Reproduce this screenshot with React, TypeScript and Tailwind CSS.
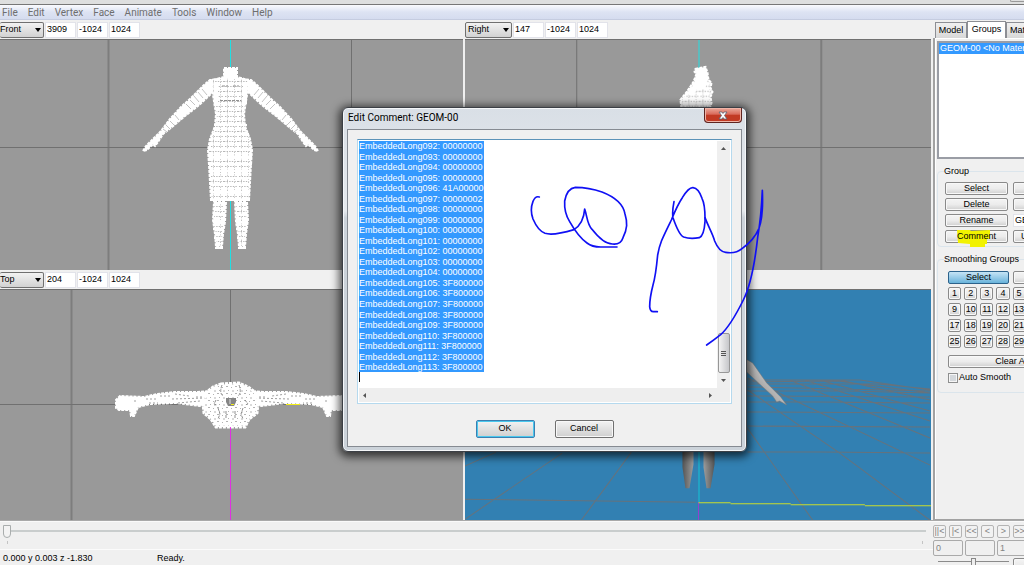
import type { ReactNode } from "react";
import clsx from "clsx";

const MENU = ["File", "Edit", "Vertex", "Face", "Animate", "Tools", "Window", "Help"];

const VALUES: Record<number, string> = { 96: "41A00000", 97: "00000002" };

const COMMENT = Array.from({ length: 22 }, (_, i) => {
  const n = 92 + i;
  const value = VALUES[n] ?? (n >= 105 ? "3F800000" : "00000000");
  return `EmbeddedLong${String(n).padStart(3, "0")}: ${value}`;
}).join("\n");

interface ViewportProps {
  name: string;
  values?: string[];
  viewBox: string;
  cut?: boolean;
  blue?: boolean;
  children: ReactNode;
}

function Viewport({ name, values = [], viewBox, cut, blue, children }: ViewportProps) {
  return (
    <section className="flex min-h-0 min-w-0 flex-col overflow-hidden">
      <div className="flex h-[19px] shrink-0 items-center gap-px">
        <div className={clsx("relative", cut ? "w-11" : "w-[47px]")}>
          <select
            aria-label="View"
            className={clsx(
              "block h-4 w-full appearance-none rounded-xs border border-[#707070] bg-linear-to-b from-[#f2f2f2] to-[#d2d2d2]",
              cut ? "border-l-0 pl-0" : "pl-[2px]"
            )}
          >
            <option>{name}</option>
          </select>
          <svg viewBox="0 0 6 4" className="pointer-events-none absolute top-[6px] right-[3px] h-1 w-[6px]">
            <path d="M0 0h6L3 4z" fill="#000" />
          </svg>
        </div>
        {values.map((v, i) => (
          <input
            key={i}
            aria-label={`${name} value ${i + 1}`}
            defaultValue={v}
            className="h-4 w-[31px] border border-[#e2e3ea] bg-white pb-px pl-px outline-none"
          />
        ))}
      </div>
      <svg
        viewBox={viewBox}
        preserveAspectRatio="xMidYMid slice"
        className={clsx(
          "min-h-0 w-full flex-1 border-t border-[#707070]",
          blue ? "bg-[#3280b2]" : "bg-[#999999]"
        )}
      >
        {children}
      </svg>
    </section>
  );
}

// vertex gaps that show through the solid white of a dense mesh
function MeshPatterns() {
  return (
    <defs>
      <pattern id="rows" width="14" height="10" patternUnits="userSpaceOnUse">
        <rect width="14" height="10" fill="#fff" />
        <path
          d="M0 1.5h14M1 6.5h12"
          stroke="#a4a4a4"
          strokeWidth=".8"
          strokeDasharray="1.4 1.2"
        />
        <path d="M3.5 0v10M10.5 2v8" stroke="#aaa" strokeWidth=".7" strokeDasharray="1 1.4" />
      </pattern>
      <pattern id="dots" width="9" height="7" patternUnits="userSpaceOnUse">
        <rect width="9" height="7" fill="#fff" />
        <path d="M1 1.5h2M6 2.5h1M3 5.5h1M7 6h2" stroke="#a0a0a0" strokeWidth=".8" />
      </pattern>
    </defs>
  );
}

const EDGE = { stroke: "#fff", strokeWidth: 2, strokeDasharray: "3 1" };

function FrontArm() {
  return (
    <>
      <path
        d="M219 79L210 80 204 85 191 98 181 107 170 119 161 131 155 137 146 146 143 151 147 150 153 144 155 146 158 142 163 134 172 127 185 116 198 106 213 92z"
        fill="#fff"
        {...EDGE}
      />
      <path
        d="M202 89l5 6M198 92l5 6M194 96l5 6M190 100l5 5M186 104l5 5M175 115l4 5M170 121l4 4M166 125l4 4M163 129l4 3"
        stroke="#b4b4b4"
        strokeWidth=".8"
      />
    </>
  );
}

function FrontView() {
  return (
    <>
      <MeshPatterns />
      <path d="M108.5 40v230" stroke="#7d7d7d" strokeWidth="2" />
      <path d="M351.5 40v230M0 147.5h463" stroke="#707070" />
      <path d="M230.5 40v230" stroke="#20dfe3" />
      <FrontArm />
      <g transform="matrix(-1 0 0 1 461 0)">
        <FrontArm />
      </g>
      <path
        d="M224 68h13v9l11 3-1 15-3 19 1 12 5 13 2 11-1 15-2 35h-38l-2-35-1-15 2-11 5-13 1-12-3-19-1-15 12-3z"
        fill="url(#rows)"
        stroke="#fff"
        strokeWidth="2"
        strokeDasharray="3 1"
      />
      <path d="M224 68h13v10h-13zM214 84h4v20h-4zM243 84h4v20h-4z" fill="#fff" />
      <path d="M220 100.5h21M222 86h6M233 86h6" stroke="#909090" strokeDasharray="3 1" />
      <path
        d="M209 150h43M209 157h43M209 164h43M210 171h41M210 178h41M211 185h39M211 192h39M211 200h39M214 125h33M212 134h37"
        stroke="#fff"
        strokeWidth="2"
      />
      <path
        d="M214 202h12l-1 20-2 12-1 13h-6l-1-13-2-14zM235 202h12l1 18-2 14-1 13h-6l-1-13-2-12z"
        fill="url(#rows)"
        {...EDGE}
      />
      <path
        d="M213 215h12M213 222h12M213 229h11M214 238h9M215 248h8M236 215h12M236 222h12M236 229h11M237 238h9M238 248h8"
        stroke="#fff"
        strokeWidth="2"
      />
    </>
  );
}

function TopArm() {
  return (
    <>
      <path
        d="M212 391l-14 1-23 0-18 2-13 3-24-1-4 4v8l3 2h11l1 6h3l4-9 12-3 26-1 24 3 15-3z"
        fill="#fff"
        {...EDGE}
      />
      <path
        d="M146 399h12M160 396h11M172 399l34-1M175 394l14 2M178 403l22-2M196 397h9M135 400v3M149 403h9"
        stroke="#a0a0a0"
        strokeDasharray="2 2"
      />
    </>
  );
}

function TopView() {
  return (
    <>
      <path d="M71.5 290v230" stroke="#7d7d7d" strokeWidth="2" />
      <path d="M0 404.5h463M230.5 290v110" stroke="#707070" />
      <path d="M230.5 404v116" stroke="#e02fe0" />
      <TopArm />
      <g transform="matrix(-1 0 0 1 461 0)">
        <TopArm />
      </g>
      <path
        d="M221 384l18 -1 9 4 7 5 3 11-1 10-8 6-4 8h-29l-5-8-7-6-1-10 4-11 6-5z"
        fill="url(#dots)"
        stroke="#fff"
        strokeWidth="3"
        strokeDasharray="3 1"
      />
      <path
        d="M222 385q-3 8 1 11M239 385q3 8-1 11M216 400l-2 4 3 1M245 400l3 4-3 1M218 408l2 6-2 5M243 408l-2 6 2 5M226 411v8M235 411v8"
        fill="none"
        stroke="#8f8f8f"
        strokeDasharray="3 1"
      />
      <path d="M226 398h10v4l-2 4h-6l-2-4z" fill="#858585" />
      <path d="M230 399v5" stroke="#ddd" />
      <path d="M231 404.5h3M286 404.5h14" stroke="#f3ee12" />
    </>
  );
}

function RightView() {
  return (
    <>
      <path d="M821.5 40v230" stroke="#7d7d7d" strokeWidth="2" />
      <path d="M577.5 40v230M466 147.5h465" stroke="#707070" />
      <path d="M699.5 40v30" stroke="#20dfe3" />
      <path
        d="M696 69l10-2 2 6 1 7 3 3-1 5 2 4-2 5 1 6-2 6h-28l-1-9 7-9 6-9 3-8-2-2z"
        fill="url(#rows)"
        {...EDGE}
      />
      <path d="M696 69l10-1 2 10-2 10-9 2-4 6-6-2 8-10 2-9z" fill="#fff" />
    </>
  );
}

function PerspectiveView() {
  return (
    <>
      <defs>
        <linearGradient id="limb">
          <stop offset="0" stopColor="#555" />
          <stop offset=".5" stopColor="#bdbdbd" />
          <stop offset="1" stopColor="#555" />
        </linearGradient>
        <linearGradient id="forearm" x1="0" y1="1" x2=".6" y2=".4">
          <stop offset="0" stopColor="#777" />
          <stop offset="1" stopColor="#c4c4c4" />
        </linearGradient>
      </defs>
      <path
        d="M748 380h112l70 10M748 382l90-1 92 12M748 384h130l52 5M748 387l182 4M748 391h100l82 2M748 396l182 1M748 402h70l112 1M748 412l182 1M748 426l182 1M748 452h72l110 1M748 390l92 63 90 67M747 427l66 93M748 378l182 87M790 380l140 58M805 380l125 41M820 380l110 31M840 380l90 20M466 499l230 3M466 519l97-66M582 520l50-68M466 466l31-14"
        fill="none"
        stroke="#67727c"
      />
      <path d="M699.5 452v50" stroke="#12c4d6" />
      <path d="M699 502v18" stroke="#9240cf" />
      <path d="M699 502.5h32M731 503.5h60M791 504.5h74M865 505.5h66" stroke="#c9dc2c" />
      <path d="M683 452h11v12l-4 24h-4l-3-21zM704 452h11v12l-4 24h-4l-3-21z" fill="url(#limb)" />
      <path
        d="M746 359l7 4 14 20 14 14 6 8-7-4-3 1-4-6-13-12-14-13z"
        fill="url(#forearm)"
        stroke="#777"
        strokeWidth=".5"
      />
    </>
  );
}

const BTN =
  "h-[13px] rounded-xs border border-[#8a8a8a] bg-linear-to-b from-[#f4f4f4] via-[#ececec] to-[#cfcfcf] text-center leading-[11px] shadow-[inset_0_0_0_1px_#f8f8f8]";

function Button({ className, children }: { className?: string; children?: ReactNode }) {
  return (
    <button type="button" className={clsx(BTN, className)}>
      {children}
    </button>
  );
}

function Sidebar() {
  return (
    <aside className="flex w-[91px] shrink-0 flex-col overflow-hidden">
      <div role="tablist" className="flex h-[18px] w-[140px] shrink-0 items-end pl-[2px]">
        <button
          type="button"
          role="tab"
          className="h-4 w-8 border border-b-0 border-[#8c8e94] bg-linear-to-b from-[#f0f0f0] to-[#d8d8d8]"
        >
          Model
        </button>
        <button
          type="button"
          role="tab"
          aria-selected="true"
          className="h-[17px] w-[39px] border border-b-0 border-[#8c8e94] bg-white"
        >
          Groups
        </button>
        <button
          type="button"
          role="tab"
          className="h-4 w-[56px] border border-b-0 border-[#8c8e94] bg-linear-to-b from-[#f0f0f0] to-[#d8d8d8] pl-[3px] text-left"
        >
          Materials
        </button>
      </div>
      <div className="flex w-[154px] flex-1 flex-col border-b border-l-2 border-[#a2a2a2] bg-[#f0f0f0] pt-[3px] pl-[2px] shadow-[inset_1px_1px_0_#fff]">
        <div role="listbox" className="h-[118px] border-2 border-[#9a9da5] bg-white">
          <div
            role="option"
            aria-selected="true"
            className="h-[11px] bg-[#3399ff] pl-px leading-[11px] whitespace-nowrap text-white"
          >
            GEOM-00 &lt;No Material&gt;
          </div>
        </div>
        <fieldset className="mt-[7px] rounded-sm border border-[#dbe5ec] pb-[3px] pl-[7px]">
          <legend className="-ml-px h-[11px] leading-[11px]">Group</legend>
          <div className="mt-[5px] grid grid-cols-[63px_63px] gap-x-[5px] gap-y-[3px]">
            <Button>Select</Button>
            <Button />
            <Button>Delete</Button>
            <Button />
            <Button>Rename</Button>
            <input
              aria-label="Group name"
              defaultValue="GEOM-00"
              className="h-[13px] border border-[#e2e3ea] bg-white pl-px outline-none"
            />
            <Button className="relative">
              <svg viewBox="0 0 36 18" className="absolute -top-px left-[10px] h-[18px] w-9">
                <path d="M1 0h13l1 1 19-1v9h-3v5h-2v3H14v-3L2 13z" fill="#f2f200" />
              </svg>
              <span className="relative">Comment</span>
            </Button>
            <Button className="pl-[7px] text-left">Up</Button>
          </div>
        </fieldset>
        <fieldset className="mt-[7px] rounded-sm border border-[#dbe5ec] pb-[9px] pl-[10px]">
          <legend className="-ml-[4px] h-[11px] leading-[11px]">Smoothing Groups</legend>
          <div className="mt-[6px] flex gap-1">
            <button
              type="button"
              className="h-[13px] w-[61px] rounded-xs border border-[#2c628b] bg-linear-to-b from-[#c5e4f5] to-[#68b3db] leading-[11px]"
            >
              Select
            </button>
            <Button className="w-[61px]" />
          </div>
          <div className="mt-[3px] grid w-[126px] grid-cols-8 gap-[3px]">
            {Array.from({ length: 32 }, (_, i) => (
              <Button key={i}>{i + 1}</Button>
            ))}
          </div>
          <Button className="mt-[7px] block w-[128px]">Clear All</Button>
          <label className="mt-[4px] flex h-[11px] items-center gap-px">
            <input
              type="checkbox"
              className="size-[10px] appearance-none border border-[#8e8f8f] bg-[#d4d8dc] shadow-[inset_0_0_0_1px_#f6f6f6]"
            />
            Auto Smooth
          </label>
        </fieldset>
      </div>
    </aside>
  );
}

const PLAYBACK = ["||<", "|<", "<<", "<", ">", ">>"];

function Timeline() {
  return (
    <footer className="flex h-[45px] shrink-0 overflow-hidden border-t border-[#a9a9a9] shadow-[inset_0_1px_0_#fafafa]">
      <div className="flex min-w-0 flex-1 flex-col">
        <div className="relative h-[34px] border-b border-[#fbfbfb]">
          <input
            type="range"
            aria-label="Frame"
            defaultValue={0}
            className="absolute top-[9px] left-[3px] h-[2px] w-[calc(100%-10px)] appearance-none bg-[#c9cdcd] [&::-webkit-slider-thumb]:h-[13px] [&::-webkit-slider-thumb]:w-[8px] [&::-webkit-slider-thumb]:appearance-none [&::-webkit-slider-thumb]:rounded-b-full [&::-webkit-slider-thumb]:border [&::-webkit-slider-thumb]:border-[#a9adad] [&::-webkit-slider-thumb]:bg-[#f3f3f3]"
          />
          <span className="absolute top-5 left-[7px] h-[3px] w-px bg-[#c4c4c4]" />
          <span className="absolute top-5 right-[10px] h-[3px] w-px bg-[#c4c4c4]" />
        </div>
        <div className="flex pt-px pl-[3px] leading-[14px]">
          <span className="w-[154px] whitespace-nowrap">0.000 y 0.003 z -1.830</span>
          <span>Ready.</span>
        </div>
      </div>
      <div className="flex w-[91px] shrink-0 flex-col gap-[2px] pt-[4px] text-[#838383]">
        <div className="flex gap-[3px]">
          {PLAYBACK.map((p) => (
            <button
              key={p}
              type="button"
              className="flex h-[13px] w-[13px] shrink-0 items-center justify-center rounded-xs border border-[#b4b4b4] bg-[#f2f2f2] leading-[11px]"
            >
              {p}
            </button>
          ))}
        </div>
        <div className="flex gap-[2px]">
          {["0", "", "1"].map((v, i) => (
            <input
              key={i}
              aria-label={`Frame field ${i + 1}`}
              defaultValue={v}
              className="h-4 w-[30px] shrink-0 rounded-xs border border-[#aaa] bg-[#f0f0f0] pl-[2px] outline-none"
            />
          ))}
        </div>
        <div className="flex h-[9px] w-[130px] items-start gap-1 pl-[5px]">
          <input
            type="range"
            aria-label="Speed"
            className="mt-[3px] h-px w-[71px] appearance-none bg-[#8b8b8b] [&::-webkit-slider-thumb]:h-[8px] [&::-webkit-slider-thumb]:w-[5px] [&::-webkit-slider-thumb]:appearance-none [&::-webkit-slider-thumb]:border [&::-webkit-slider-thumb]:border-[#888] [&::-webkit-slider-thumb]:bg-[#eee]"
          />
          <Button className="w-10" />
        </div>
      </div>
    </footer>
  );
}

function Arrow({ d }: { d: string }) {
  return (
    <svg viewBox="0 0 7 7" className="size-[7px] shrink-0">
      <path d={d} fill="#555" />
    </svg>
  );
}

function CommentDialog() {
  return (
    <div
      role="dialog"
      aria-label="Edit Comment: GEOM-00"
      className="absolute top-[107px] left-[342px] flex h-[345px] w-[405px] flex-col rounded-md border border-[#3b3f45] bg-linear-to-b from-[#d9dfe6] from-0% via-[#e6eaee] via-30% to-[#ccd3da] to-32% p-1 pt-0 shadow-[0_2px_9px_3px_rgba(0,0,0,0.65),inset_0_0_0_1px_#f4f6f8]"
    >
      <div className="flex h-[21px] shrink-0 items-start justify-between pl-px">
        <h2 className="pt-[3px] font-[Roboto,sans-serif] text-[10px] leading-[14px]">Edit Comment: GEOM-00</h2>
        <button
          type="button"
          aria-label="Close"
          className="flex h-[15px] w-[38px] items-center justify-center rounded-b-sm border border-t-0 border-[#5e2420] bg-linear-to-b from-[#e9a99c] from-0% via-[#d9695a] via-45% to-[#c23a24] to-50% shadow-[inset_0_0_0_1px_#efb5a8]"
        >
          <svg viewBox="0 0 10 9" className="h-[9px] w-[10px]">
            <path
              d="M1 1h3l1 1.5L6 1h3L6.500 4.500 9 8H6L5 6.500 4 8H1l2.500-3.500z"
              fill="#fff"
              stroke="#5b6070"
              strokeWidth=".8"
            />
          </svg>
        </button>
      </div>
      <div className="flex flex-1 flex-col border border-[#868b92] bg-[#f0f0f0] px-[9px] pt-[9px]">
        <div className="flex h-[265px] flex-col border border-[#b5d9ee] border-t-[#5d93b8] bg-white p-px">
          <div className="flex min-h-0 flex-1">
            <div className="min-w-0 flex-1">
              <textarea
                aria-label="Comment"
                rows={22}
                defaultValue={COMMENT}
                wrap="off"
                className="block h-[231px] w-[125px] resize-none overflow-hidden bg-[#3399ff] leading-[117%] text-white outline-none"
              />
              <span className="block h-[10px] w-px bg-black" />
            </div>
            <div className="flex w-[13px] flex-col items-center bg-[#efefef] py-[4px]">
              <Arrow d="M3.500 2L6 5H1z" />
              <div className="mt-auto mb-[4px] flex h-10 w-3 flex-col items-center justify-center gap-px rounded-xs border border-[#979797] bg-linear-to-r from-[#f3f3f3] to-[#c6c7ca]">
                <span className="h-px w-[5px] bg-[#555]" />
                <span className="h-px w-[5px] bg-[#555]" />
                <span className="h-px w-[5px] bg-[#555]" />
              </div>
              <Arrow d="M3.500 5L6 2H1z" />
            </div>
          </div>
          <div className="flex h-[14px] items-center justify-between bg-[#eeeeee] pr-[16px] pl-[2px]">
            <Arrow d="M2 3.500L5 1v5z" />
            <Arrow d="M5 3.500L2 1v5z" />
          </div>
        </div>
        <div className="mt-4 flex justify-center gap-5">
          <button
            type="button"
            className="h-[18px] w-[59px] rounded-xs border border-[#3c7fb1] bg-linear-to-b from-[#f3f3f3] to-[#cfcfcf] shadow-[inset_0_0_0_1px_#4ac8ee]"
          >
            OK
          </button>
          <button
            type="button"
            className="h-[18px] w-[59px] rounded-xs border border-[#707070] bg-linear-to-b from-[#f3f3f3] to-[#cfcfcf] shadow-[inset_0_0_0_1px_#f8f8f8]"
          >
            Cancel
          </button>
        </div>
      </div>
    </div>
  );
}

// freehand "copy" drawn in pen over the window
function Scribble() {
  return (
    <svg
      viewBox="0 0 930 1026"
      className="pointer-events-none absolute top-[180px] left-[464px] h-[342px] w-[310px]"
    >
      <g fill="none" stroke="#1010f4" strokeWidth="5" strokeLinecap="round" strokeLinejoin="round">
        <path d="M226 51Q214 47 207 64Q197 90 207 117Q222 152 243 160Q267 168 330 149C350 136 360 115 362 87C370 110 369 132 384 148C405 175 424 192 445 192Q470 195 477 173C490 146 491 128 483 102C478 72 450 50 414 36Q375 22 334 22Q309 25 302 63Q300 98 317 125Q343 171 369 189Q384 201 410 201H459" />
        <path d="M630 65Q624 95 627 113Q645 165 659 171Q678 178 706 173Q720 168 723 125Q724 75 714 55Q704 25 687 23Q674 22 655 53Q640 75 622 120C595 175 587 190 581 225Q575 288 567 315Q557 354 557 380Q558 395 568 395H580" />
        <path d="M723 113C735 145 745 158 752 183Q765 215 785 217Q815 222 835 205Q870 180 885 145C896 115 897 75 895 31C893 80 890 120 881 172C873 245 858 320 838 360Q800 437 770 464Q750 480 728 495" />
      </g>
    </svg>
  );
}

export default function App() {
  return (
    <div className="relative flex h-screen flex-col overflow-hidden bg-[#f0f0f0] font-['Liberation_Sans',Arial,sans-serif] text-[9px] text-black">
      <div className="flex h-[5px] shrink-0 justify-end border-b border-[#777] bg-[#dedfdf]">
        <span className="h-[2px] w-[14px] rounded-bl-sm border-b border-l border-[#999]" />
      </div>
      <nav className="flex h-[15px] shrink-0 items-center gap-[10px] border-b border-[#c5cce0] bg-linear-to-b from-[#fafbfe] via-[#dde3f3] to-[#d5dcef] pt-px pl-[2px] font-[Roboto,sans-serif] text-[10px] leading-[14px] text-[#6e6e6e]">
        {MENU.map((m) => (
          <button key={m} type="button">
            {m}
          </button>
        ))}
      </nav>
      <div className="flex min-h-0 flex-1">
        <main className="mr-[2px] grid min-w-0 flex-1 grid-cols-[463fr_466fr] grid-rows-2 gap-x-[2px]">
          <Viewport name="Front" values={["3909", "-1024", "1024"]} viewBox="0 40 463 230" cut>
            <FrontView />
          </Viewport>
          <Viewport name="Right" values={["147", "-1024", "1024"]} viewBox="466 40 465 230">
            <RightView />
          </Viewport>
          <Viewport name="Top" values={["204", "-1024", "1024"]} viewBox="0 290 463 230" cut>
            <TopView />
          </Viewport>
          <Viewport name="3D" viewBox="466 290 465 230" blue>
            <PerspectiveView />
          </Viewport>
        </main>
        <Sidebar />
      </div>
      <Timeline />
      <CommentDialog />
      <Scribble />
    </div>
  );
}
